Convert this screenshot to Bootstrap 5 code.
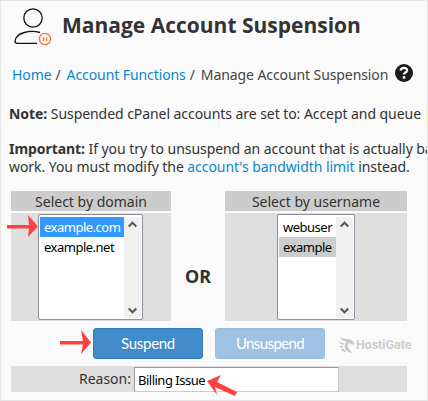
<!DOCTYPE html>
<html lang="en">
<head>
<meta charset="utf-8">
<meta name="viewport" content="width=device-width, initial-scale=1">
<title>Manage Account Suspension</title>
<link href="https://cdn.jsdelivr.net/npm/bootstrap@5.3.0/dist/css/bootstrap.min.css" rel="stylesheet">
<style>
body{font-family:"Noto Sans","Open Sans",sans-serif;font-size:14px;line-height:18px;color:#333;background:#fafafa}
.page{width:428px;height:401px;border:1px solid #e6e6e6;background:#fafafa}
.page a{color:#0d86cc;text-decoration:none}
.top{height:62px;padding:6px 0 0 12px}
.top h1{font-family:"Open Sans",sans-serif;font-size:21px;line-height:30px;font-weight:700;margin:3px 0 0 10px;white-space:nowrap}
.crumbs{height:24px;padding-left:11px;white-space:nowrap;color:#444;letter-spacing:-.09px}
.crumbs .sep{margin:0 6px 0 4px}
.crumbs svg{margin:-5px 0 0 7px}
.notes{padding-left:8px;padding-top:18px;height:104px;white-space:nowrap;letter-spacing:-.06px}
.notes p{margin:0 0 17px}
.notes .line{display:block}
.hl{display:inline-block;vertical-align:middle;background:#ffffb0;width:2px;height:16px;margin-left:4px}
.panels{height:130px;padding-left:10px}
.panel-l{width:160px}.panel-r{width:182px}
.panel-head{height:20px;line-height:21px;background:#ccc;text-align:center;margin-bottom:2px;white-space:nowrap}
.panel-body{height:108px;background:#dedede;padding-top:1px}
.listbox{height:106px;background:#fff;border:1px solid #8f8f9d;border-radius:2px;padding:2px 1px 1px;color:#000;font-size:13px;letter-spacing:-.5px;line-height:20px}
.listbox .opt{height:20px;padding-left:4px;white-space:nowrap}
.lb-l{width:105px;margin-left:27px}.lb-r{width:78px;margin-left:52px}
.sel{background:#3399ff;color:#fff}.sel-off{background:#cdcdcd}
.track{width:17px;background:#f0f0f0;padding:4px 0}
.or{width:54px;font-size:18px;line-height:20px;padding-top:75px;text-align:center}
.actions{height:45px;padding:7px 0 0 92px}
.actions .btn{width:110px;height:31px;padding:0;font-family:Lato,sans-serif;font-size:15px;line-height:29px;color:#fff;background:#428bca;border:1px solid #357ebd;border-radius:3px;margin-right:12px}
.actions .btn.off{background:#9fc2e3;border-color:#98bddf;letter-spacing:-.6px}
.actions .btn.on{letter-spacing:-.3px}
.brand{height:31px;font-family:Inter,sans-serif;font-size:11.5px;font-weight:700;color:#ccc;margin:1px 0 0 1px}
.brand span{margin-left:1px}
.reason{width:396px;height:26px;margin-left:10px;background:#dedede}
.reason label{width:123px;text-align:right;padding-right:3px}
.field{width:205px;height:25px;background:#fff;border:1px solid #ccc;border-top-color:#999;border-left-color:#999;color:#000;font-size:13px;letter-spacing:-.5px;line-height:24px;padding-left:3px}
.arrow{position:absolute;fill:#ff4040}
</style>
</head>
<body>
<main class="page position-relative overflow-hidden">
  <header class="top d-flex">
    <svg width="39" height="39" viewBox="0 0 39 39" fill="none" stroke="#111" stroke-width="1.3">
      <circle cx="20" cy="11" r="9.2"/><path d="M27 25.500C18 23 2.500 25 2 34.500Q2 36.300 4 36.300H24"/>
      <g stroke="#ff6c2c" stroke-width="1.2"><circle cx="32" cy="32" r="5.600"/><path d="M30.500 30V34M33.500 30V34"/></g>
    </svg>
    <h1>Manage Account Suspension</h1>
  </header>
  <nav class="crumbs d-flex align-items-center"><a href="#">Home</a><span class="sep">/</span><a href="#">Account Functions</a><span class="sep">/</span><span>Manage Account Suspension</span>
    <svg width="18" height="18" viewBox="0 0 18 18"><circle cx="9" cy="9" r="9" fill="#1c1a1b"/><path d="M5.600 6.500C6.100 2.900 12.500 3.100 12.100 6.500C11.900 8.500 9 8.600 9 10.500" fill="none" stroke="#fff" stroke-width="2.300"/><path d="M7.700 12.200h2.600v2.500H7.700z" fill="#fff"/></svg>
  </nav>
  <section class="notes">
    <p><b>Note:</b> Suspended cPanel accounts are set to: Accept and queue<span class="hl"></span></p>
    <p><span class="line"><b>Important:</b> If you try to unsuspend an account that is actually ba</span><span class="line">work. You must modify the <a href="#">account's bandwidth limit</a> instead.</span></p>
  </section>
  <section class="panels d-flex">
    <div class="panel-l"><div class="panel-head">Select by domain</div>
      <div class="panel-body"><div class="listbox lb-l d-flex">
        <div class="flex-grow-1"><div class="opt sel">example.com</div><div class="opt">example.net</div></div>
        <div class="track d-flex flex-column justify-content-between align-items-center">
          <svg width="9" height="7" fill="none" stroke="#555" stroke-width="2"><path d="M.7 5.500L4.500 1.700 8.300 5.500"/></svg>
          <svg width="9" height="7" fill="none" stroke="#555" stroke-width="2"><path d="M.7 1.500L4.500 5.300 8.300 1.500"/></svg>
        </div></div></div></div>
    <div class="or fw-bold">OR</div>
    <div class="panel-r"><div class="panel-head">Select by username</div>
      <div class="panel-body"><div class="listbox lb-r d-flex">
        <div class="flex-grow-1"><div class="opt">webuser</div><div class="opt sel-off">example</div></div>
        <div class="track d-flex flex-column justify-content-between align-items-center">
          <svg width="9" height="7" fill="none" stroke="#555" stroke-width="2"><path d="M.7 5.500L4.500 1.700 8.300 5.500"/></svg>
          <svg width="9" height="7" fill="none" stroke="#555" stroke-width="2"><path d="M.7 1.500L4.500 5.300 8.300 1.500"/></svg>
        </div></div></div></div>
  </section>
  <div class="actions d-flex">
    <button class="btn on" type="button">Suspend</button><button class="btn off" type="button">Unsuspend</button>
    <div class="brand d-flex align-items-center"><svg width="17" height="18" viewBox="0 0 17 18" fill="#c8c8c8"><path d="M2 1Q8 4 12 3Q16 5 16 9L11 7Q8 9 11 13L14 17Q8 16 7 12Q6 8 9 6Q4 5 2 1Z"/><path d="M0 5Q4 8 7 7L5 9Q2 8 0 5ZM1 9Q3 11 5 10V12Q2 12 1 9ZM3 13L6 13 8 16Q4 16 3 13Z"/></svg><span>HostiGate</span></div>
  </div>
  <div class="reason d-flex align-items-center"><label>Reason:</label><div class="field">Billing Issue</div></div>
  <svg class="arrow" style="left:6px;top:212px" width="32" height="26"><path d="M0 12H22L21 2L31 13.500 21 24 22 15.500H0Z"/></svg>
  <svg class="arrow" style="left:59px;top:328px" width="32" height="26"><path d="M0 12H23L21 1L31 13.500 21 25 23 15.500H0Z"/></svg>
  <svg class="arrow" style="left:206px;top:374px" width="32" height="22"><path d="M0 6L14 0 10 7 30 17 28 21 8 12 10 20Z"/></svg>
</main>
<script src="https://cdn.jsdelivr.net/npm/bootstrap@5.3.0/dist/js/bootstrap.bundle.min.js"></script>
</body>
</html>
